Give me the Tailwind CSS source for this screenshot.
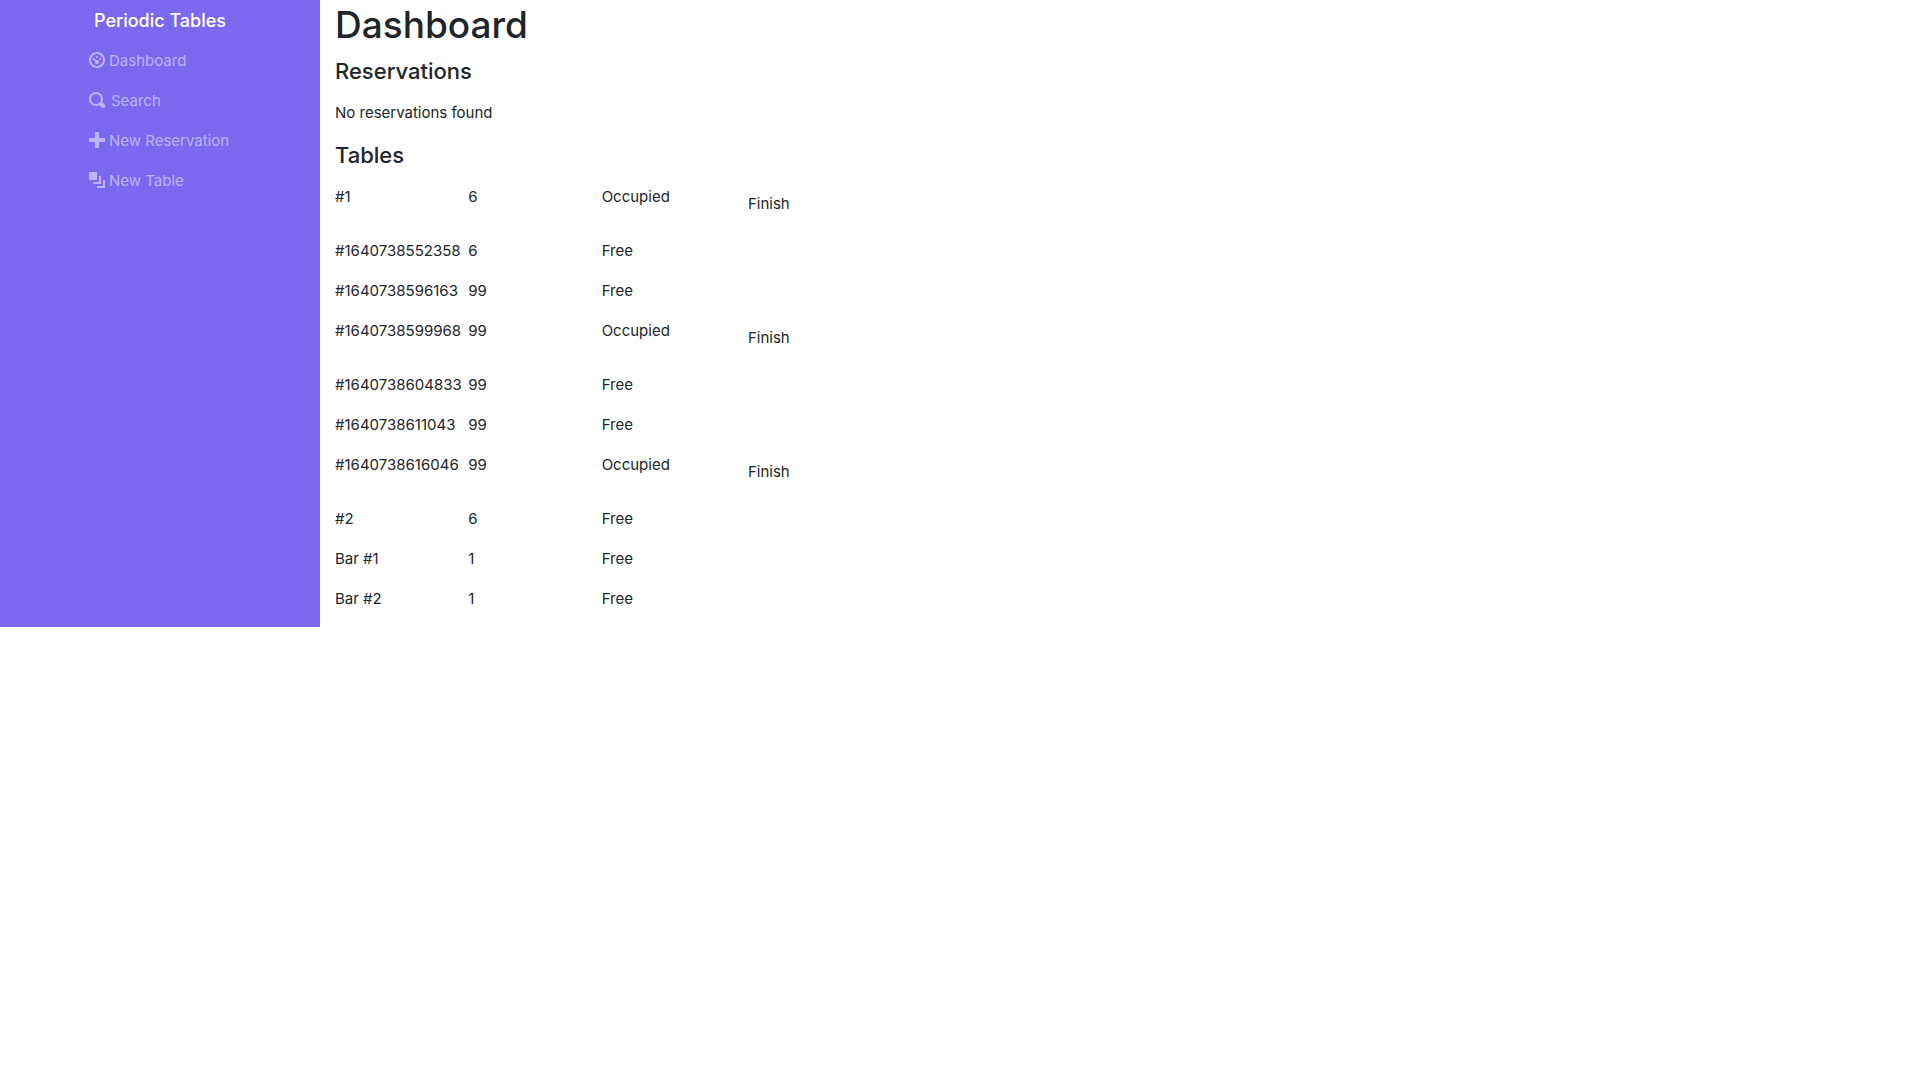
<!DOCTYPE html>
<html lang="en">
<head>
<meta charset="utf-8">
<title>Periodic Tables</title>
<script src="https://cdn.jsdelivr.net/npm/@tailwindcss/browser@4"></script>
</head>
<body class="bg-white font-[Inter,sans-serif] text-[15px] leading-6 text-[#212529]">
<div class="flex items-stretch">
  <aside class="flex w-1/6 flex-col items-center bg-[#7b68ee] text-white/50">
    <a href="#" class="flex h-10 items-center pt-px text-lg font-medium text-white">Periodic Tables</a>
    <nav class="w-[142px]">
      <ul>
        <li><a href="#" class="flex h-10 items-center gap-1 whitespace-nowrap">
          <svg class="size-4" viewBox="0 0 8 8" fill="currentColor" aria-hidden="true"><path d="M4 0c-2.2 0-4 1.8-4 4s1.8 4 4 4 4-1.8 4-4-1.8-4-4-4zm0 1c1.66 0 3 1.34 3 3s-1.34 3-3 3-3-1.34-3-3 1.34-3 3-3zm0 1c-.28 0-.5.22-.5.5s.22.5.5.5.5-.22.5-.5-.22-.5-.5-.5zm-1.66 1a.5.5 0 0 0-.19.84l.91.91c-.02.08-.06.16-.06.25 0 .55.45 1 1 1s1-.45 1-1-.45-1-1-1c-.09 0-.17.04-.25.06l-.91-.91a.5.5 0 0 0-.44-.16zm3.16 0c-.28 0-.5.22-.5.5s.22.5.5.5.5-.22.5-.5-.22-.5-.5-.5z"/></svg>
          <span class="pt-0.5">Dashboard</span></a></li>
        <li><a href="#" class="flex h-10 items-center gap-1.5 whitespace-nowrap">
          <svg class="size-4" viewBox="0 0 8 8" fill="currentColor" aria-hidden="true"><path d="M3.5 0c-1.93 0-3.5 1.57-3.5 3.5s1.57 3.5 3.5 3.5c.59 0 1.17-.14 1.66-.41a1 1 0 0 0 .13.13l1 1a1.02 1.02 0 1 0 1.44-1.44l-1-1a1 1 0 0 0-.16-.13c.27-.49.44-1.06.44-1.66 0-1.93-1.55-3.5-3.5-3.5zm0 1c1.39 0 2.5 1.11 2.5 2.5 0 .66-.24 1.27-.66 1.72-.01.01-.02.02-.03.03a1 1 0 0 0-.13.13c-.44.4-1.04.63-1.69.63-1.39 0-2.5-1.11-2.5-2.5s1.11-2.5 2.5-2.5z"/></svg>
          <span class="pt-0.5">Search</span></a></li>
        <li><a href="#" class="flex h-10 items-center gap-1 whitespace-nowrap">
          <svg class="size-4" viewBox="0 0 8 8" fill="currentColor" aria-hidden="true"><path d="M3 0v3h-3v2h3v3h2v-3h3v-2h-3v-3h-2z"/></svg>
          <span class="pt-0.5">New Reservation</span></a></li>
        <li><a href="#" class="flex h-10 items-center gap-1 whitespace-nowrap">
          <svg class="size-4" viewBox="0 0 8 8" fill="currentColor" aria-hidden="true"><path d="M0 0v4h4v-4h-4zm5 2v3h-3v1h4v-4h-1zm2 2v3h-3v1h4v-4h-1z"/></svg>
          <span class="pt-0.5">New Table</span></a></li>
      </ul>
    </nav>
  </aside>
  <main class="flex-1 pt-px">
    <h1 class="mb-2 px-[15px] text-[37px] leading-12 font-medium">Dashboard</h1>
    <h4 class="mb-4 px-[15px] text-[22px] leading-7 font-medium">Reservations</h4>
    <p class="mb-4 px-[15px]">No reservations found</p>
    <h4 class="mb-4 px-[15px] text-[22px] leading-7 font-medium">Tables</h4>
    <table class="w-1/3 table-fixed text-left whitespace-nowrap">
      <tbody class="align-top">
        <tr><td class="pb-4 pl-[15px]">#1</td><td class="pl-[15px]">6</td><td class="pl-[15px]">Occupied</td><td class="pb-4 pl-[15px]"><button type="button" class="block px-[13px] py-[7px]">Finish</button></td></tr>
        <tr><td class="pb-4 pl-[15px]">#1640738552358</td><td class="pl-[15px]">6</td><td class="pl-[15px]">Free</td><td></td></tr>
        <tr><td class="pb-4 pl-[15px]">#1640738596163</td><td class="pl-[15px]">99</td><td class="pl-[15px]">Free</td><td></td></tr>
        <tr><td class="pb-4 pl-[15px]">#1640738599968</td><td class="pl-[15px]">99</td><td class="pl-[15px]">Occupied</td><td class="pb-4 pl-[15px]"><button type="button" class="block px-[13px] py-[7px]">Finish</button></td></tr>
        <tr><td class="pb-4 pl-[15px]">#1640738604833</td><td class="pl-[15px]">99</td><td class="pl-[15px]">Free</td><td></td></tr>
        <tr><td class="pb-4 pl-[15px]">#1640738611043</td><td class="pl-[15px]">99</td><td class="pl-[15px]">Free</td><td></td></tr>
        <tr><td class="pb-4 pl-[15px]">#1640738616046</td><td class="pl-[15px]">99</td><td class="pl-[15px]">Occupied</td><td class="pb-4 pl-[15px]"><button type="button" class="block px-[13px] py-[7px]">Finish</button></td></tr>
        <tr><td class="pb-4 pl-[15px]">#2</td><td class="pl-[15px]">6</td><td class="pl-[15px]">Free</td><td></td></tr>
        <tr><td class="pb-4 pl-[15px]">Bar #1</td><td class="pl-[15px]">1</td><td class="pl-[15px]">Free</td><td></td></tr>
        <tr><td class="pb-4 pl-[15px]">Bar #2</td><td class="pl-[15px]">1</td><td class="pl-[15px]">Free</td><td></td></tr>
      </tbody>
    </table>
  </main>
</div>
</body>
</html>
